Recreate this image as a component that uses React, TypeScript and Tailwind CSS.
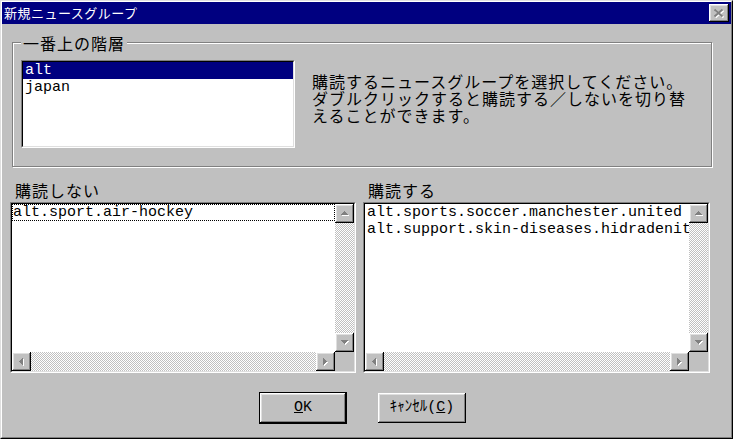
import React from 'react'

const jp = "font-['Noto_Sans_CJK_JP',sans-serif]"
const mono = "font-['Liberation_Mono','Noto_Sans_CJK_JP',monospace]"
const raised =
  'bg-[#c0c0c0] shadow-[inset_-1px_-1px_0_#000,inset_1px_1px_0_#fff,inset_-2px_-2px_0_#808080,inset_2px_2px_0_#dfdfdf]'
const checker =
  'bg-[image:repeating-conic-gradient(#c0c0c0_0_25%,#ffffff_0_50%)] bg-[length:2px_2px]'

type Dir = 'up' | 'down' | 'left' | 'right'

// pixel triangles, drawn row by row
const shapes: Record<Dir, string> = {
  up: 'M3 0h1v1h-1zM2 1h3v1h-3zM1 2h5v1h-5zM0 3h7v1h-7z',
  down: 'M0 0h7v1h-7zM1 1h5v1h-5zM2 2h3v1h-3zM3 3h1v1h-1z',
  left: 'M3 0h1v7h-1zM2 1h1v5h-1zM1 2h1v3h-1zM0 3h1v1h-1z',
  right: 'M0 0h1v7h-1zM1 1h1v5h-1zM2 2h1v3h-1zM3 3h1v1h-1z',
}

const Arrow = ({ dir }: { dir: Dir }) => {
  const vertical = dir === 'up' || dir === 'down'
  return (
    <div className={`${raised} flex items-center justify-center w-[19px] h-[19px] shrink-0`}>
      <svg
        width={vertical ? 8 : 5}
        height={vertical ? 5 : 8}
        viewBox={vertical ? '0 0 8 5' : '0 0 5 8'}
        shapeRendering="crispEdges"
      >
        <path d={shapes[dir]} fill="#fff" transform="translate(1,1)" />
        <path d={shapes[dir]} fill="#808080" />
      </svg>
    </div>
  )
}

const ListBox = ({ w, children }: { w: string; children: React.ReactNode }) => (
  <div className={`${w} h-[171px] border border-t-[#808080] border-l-[#808080] border-r-white border-b-white`}>
    <div className="h-full flex flex-col border border-t-black border-l-black border-r-[#dfdfdf] border-b-[#dfdfdf]">
      <div className="flex flex-1 min-h-0">
        <div className={`flex-1 min-w-0 bg-white overflow-hidden whitespace-nowrap text-[15px] leading-[17px] ${mono}`}>
          {children}
        </div>
        <div className="w-[19px] flex flex-col">
          <Arrow dir="up" />
          <div className={`flex-1 ${checker}`} />
          <Arrow dir="down" />
        </div>
      </div>
      <div className="flex h-[19px]">
        <Arrow dir="left" />
        <div className={`flex-1 ${checker}`} />
        <Arrow dir="right" />
        <div className="w-[19px] bg-[#c0c0c0]" />
      </div>
    </div>
  </div>
)

export default function App() {
  return (
    <div className="w-[733px] h-[439px] bg-[#c0c0c0] border border-t-[#dfdfdf] border-l-[#dfdfdf] border-r-black border-b-black">
      <div className="h-full flex flex-col border border-t-white border-l-white border-r-[#808080] border-b-[#808080]">
        {/* title bar */}
        <div className="h-[22px] bg-[#000080] flex items-center justify-between pl-[2px] pr-[2px]">
          <span className={`text-white text-[13px] tracking-[0.5px] leading-[16px] ${jp}`}>新規ニュースグループ</span>
          <div className={`${raised} w-[20px] h-[18px] flex items-center justify-center`}>
            <svg width="12" height="11" viewBox="0 0 12 11">
              <path d="M1.5 1.5l8 7M9.5 1.5l-8 7" stroke="#fff" strokeWidth="2" transform="translate(1,1)" />
              <path d="M1.5 1.5l8 7M9.5 1.5l-8 7" stroke="#808080" strokeWidth="2" />
            </svg>
          </div>
        </div>

        {/* group box */}
        <div className="relative ml-[10px] mt-[18px] w-[700px] h-[125px] border border-[#808080] shadow-[inset_1px_1px_0_#fff,1px_1px_0_#fff] flex pl-[8px] pt-[17px]">
          <span className={`absolute left-[8px] -top-[8px] px-[2px] bg-[#c0c0c0] text-[16px] leading-[17px] tracking-[1px] ${jp}`}>
            一番上の階層
          </span>
          <div className="w-[274px] h-[88px] border border-t-[#808080] border-l-[#808080] border-r-white border-b-white">
            <div className={`h-full bg-white border border-t-black border-l-black border-r-[#dfdfdf] border-b-[#dfdfdf] text-[15px] leading-[17px] ${mono}`}>
              <div className="bg-[#000080] text-white pl-[2px]">alt</div>
              <div className="pl-[2px]">japan</div>
            </div>
          </div>
          <p className={`ml-[17px] mt-[13px] text-[16px] leading-[17px] tracking-[1px] whitespace-nowrap ${jp}`}>
            購読するニュースグループを選択してください。
            <br />
            ダブルクリックすると購読する／しないを切り替
            <br />
            えることができます。
          </p>
        </div>

        {/* labels */}
        <div className={`flex gap-[7px] ml-[8px] mt-[15px] text-[16px] leading-[17px] tracking-[1px] ${jp}`}>
          <div className="w-[346px] pl-[5px]">購読しない</div>
          <div className="w-[347px] pl-[5px]">購読する</div>
        </div>

        {/* lists */}
        <div className="flex gap-[7px] ml-[8px] mt-[3px]">
          <ListBox w="w-[346px]">
            <div className="outline outline-dotted -outline-offset-1 outline-black pl-px">alt.sport.air-hockey</div>
          </ListBox>
          <ListBox w="w-[347px]">
            <div className="pl-[2px]">alt.sports.soccer.manchester.united</div>
            <div className="pl-[2px]">alt.support.skin-diseases.hidradenitis</div>
          </ListBox>
        </div>

        {/* buttons */}
        <div className={`flex justify-center items-center gap-[31px] pr-[8px] mt-[19px] text-[15px] ${mono}`}>
          <div className="w-[88px] h-[32px] border border-black">
            <div className={`${raised} h-full flex items-center justify-center`}>
              <span><span className="underline underline-offset-[1px]">O</span>K</span>
            </div>
          </div>
          <div className={`${raised} w-[88px] h-[30px] flex items-center justify-center`}>
            <span>ｷｬﾝｾﾙ(<span className="underline underline-offset-[1px]">C</span>)</span>
          </div>
        </div>
      </div>
    </div>
  )
}
